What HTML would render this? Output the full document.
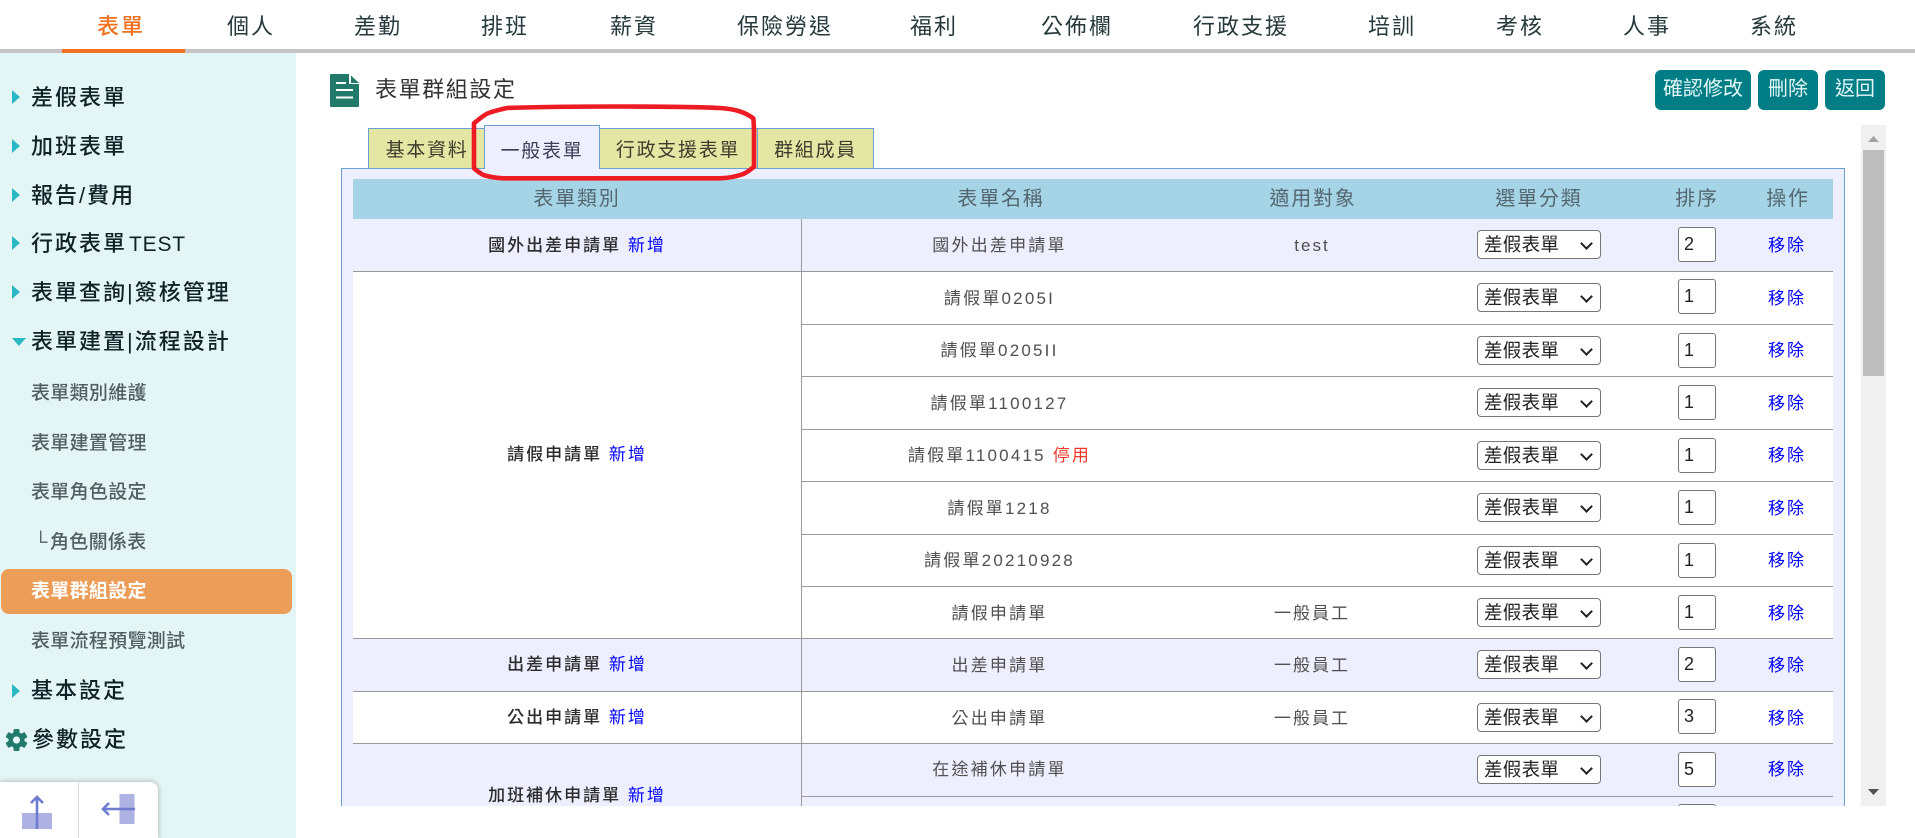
<!DOCTYPE html>
<html lang="zh-Hant">
<head>
<meta charset="utf-8">
<title>表單群組設定</title>
<style>
html,body{margin:0;padding:0;width:1915px;height:838px;overflow:hidden;background:#fff}
body{position:relative;font-family:"Liberation Sans","Noto Sans CJK TC",sans-serif;color:#333}
*{box-sizing:content-box}
.abs{position:absolute}
.nav{position:absolute;top:7px;margin-left:-1px;width:200px;height:40px;line-height:40px;text-align:center;font-size:22px;letter-spacing:2px;color:#25393c;white-space:nowrap}
#line{position:absolute;left:0;top:49px;width:1915px;height:4px;background:#c4c4c4}
#under{position:absolute;left:62px;top:49px;width:123px;height:4px;background:#f0711f}
#side{position:absolute;left:0;top:53px;width:296px;height:785px;background:#e4f5f6}
.m{position:absolute;left:31px;height:40px;line-height:40px;font-size:22px;letter-spacing:2px;color:#0f2226;font-weight:500;white-space:nowrap}
.m span{font-size:21px;letter-spacing:.8px;margin-left:2px}
.s{position:absolute;left:31px;height:40px;line-height:40px;font-size:19px;letter-spacing:.3px;color:#525f62;font-weight:500;white-space:nowrap}
.tri{position:absolute;left:12px;width:0;height:0;border-left:8px solid #2ab9c4;border-top:7px solid transparent;border-bottom:7px solid transparent}
#pill{position:absolute;left:1px;top:569px;width:291px;height:45px;background:#ec9d58;border-radius:8px}
#dock{position:absolute;left:0;top:782px;width:158px;height:56px;background:#fff;border-radius:0 8px 0 0;box-shadow:0 0 6px rgba(0,0,0,.3)}
#title{position:absolute;left:375px;top:70px;height:40px;line-height:40px;font-size:22px;letter-spacing:1.6px;color:#333;white-space:nowrap}
.btn{position:absolute;top:70px;height:40px;line-height:39px;text-align:center;background:#007d85;border-radius:6px;color:#e4f7f7;font-size:20px;letter-spacing:0}
#layer{position:absolute;left:0;top:0;width:1915px;height:838px;clip-path:inset(0 0 32px 0)}
.tab{position:absolute;top:128px;height:40px;box-sizing:border-box;background:#e4e7a4;border:1px solid #6a9fd2;border-bottom:none;line-height:44px;text-align:center;font-size:19px;letter-spacing:1.7px;color:#3c3c2c;white-space:nowrap}
#panel{position:absolute;left:341px;top:168px;width:1502px;height:660px;background:#edefff;border:1px solid #6a9fd2}
#atab{position:absolute;left:484px;top:125px;width:116px;height:44px;box-sizing:border-box;background:#edefff;border:1px solid #6a9fd2;border-bottom:none;line-height:52px;text-align:center;font-size:19px;letter-spacing:1.7px;color:#3d3d55;white-space:nowrap}
#thead{position:absolute;left:353px;top:179px;width:1480px;height:40px;background:#a5d4e6}
.th{position:absolute;top:180px;width:200px;height:40px;line-height:39px;text-align:center;font-size:20px;letter-spacing:1.8px;color:#54666e;white-space:nowrap}
.c1{position:absolute;left:353px;width:448px;text-align:center;font-size:17px;letter-spacing:2px;color:#2b2b2b;font-weight:500;border-bottom:1px solid #999;white-space:nowrap}
.c1 a,.x{color:#00f;font-weight:400;text-decoration:none}
#vline{position:absolute;left:801px;top:219px;width:1px;height:620px;background:#999}
.r{position:absolute;left:802px;width:1031px;border-bottom:1px solid #999}
.bg{background:#edefff}.wh{background:#fff}
.n{position:absolute;left:-1px;top:2px;width:397px;height:100%;text-align:center;font-size:17px;letter-spacing:2.2px;color:#505050;white-space:nowrap}
.t{position:absolute;left:410px;top:2px;width:200px;height:100%;text-align:center;font-size:17px;letter-spacing:2px;color:#505050;white-space:nowrap}
.x{position:absolute;left:885px;top:2px;width:200px;height:100%;text-align:center;font-size:17px;letter-spacing:2px;white-space:nowrap}
select{position:absolute;left:675px;width:124px;height:29px;box-sizing:border-box;padding:0 0 0 6px;margin:0;background:#fff;border:1px solid #767676;border-radius:4px;color:#222;font-family:"Liberation Sans","Noto Sans CJK TC",sans-serif;font-size:18.5px;letter-spacing:.3px;appearance:none;-webkit-appearance:none}
.ch{position:absolute;left:780px;width:9px;height:9px;margin-top:-1px;box-sizing:border-box;border-right:2px solid #222;border-bottom:2px solid #222;transform:rotate(45deg)}
input{position:absolute;left:876px;width:38px;height:35px;box-sizing:border-box;padding:0 0 0 5px;margin:0;background:#fff;border:1px solid #767676;border-radius:3px;color:#222;font-family:"Liberation Sans","Noto Sans CJK TC",sans-serif;font-size:18px}
#bar{position:absolute;left:1861px;top:125px;width:25px;height:681px;background:#f0f0f0}
#thumb{position:absolute;left:2px;top:25px;width:21px;height:226px;background:#bdbdbd}
.red{color:#f0392b}
</style>
</head>
<body>
<div class="nav" style="left:22px;color:#f0711f;font-weight:500">表單</div>
<div class="nav" style="left:152px">個人</div>
<div class="nav" style="left:279px">差勤</div>
<div class="nav" style="left:406px">排班</div>
<div class="nav" style="left:535px">薪資</div>
<div class="nav" style="left:686px">保險勞退</div>
<div class="nav" style="left:835px">福利</div>
<div class="nav" style="left:978px">公佈欄</div>
<div class="nav" style="left:1142px">行政支援</div>
<div class="nav" style="left:1293px">培訓</div>
<div class="nav" style="left:1421px">考核</div>
<div class="nav" style="left:1548px">人事</div>
<div class="nav" style="left:1675px">系統</div>
<div id="line"></div><div id="under"></div>

<div id="side"></div>
<div class="tri" style="top:90px"></div><div class="m" style="top:78px">差假表單</div>
<div class="tri" style="top:139px"></div><div class="m" style="top:127px">加班表單</div>
<div class="tri" style="top:188px"></div><div class="m" style="top:176px">報告/費用</div>
<div class="tri" style="top:236px"></div><div class="m" style="top:224px">行政表單<span>TEST</span></div>
<div class="tri" style="top:285px"></div><div class="m" style="top:273px">表單查詢|簽核管理</div>
<div class="abs" style="left:12px;top:338px;width:0;height:0;border-top:8px solid #2ab9c4;border-left:7px solid transparent;border-right:7px solid transparent"></div>
<div class="m" style="top:322px">表單建置|流程設計</div>
<div class="s" style="top:374px">表單類別維護</div>
<div class="s" style="top:424px">表單建置管理</div>
<div class="s" style="top:473px">表單角色設定</div>
<div class="s" style="top:523px;left:34px;font-weight:400">└</div>
<div class="s" style="top:523px;left:50px">角色關係表</div>
<div id="pill"></div>
<div class="s" style="top:572px;color:#fff;font-weight:700">表單群組設定</div>
<div class="s" style="top:622px">表單流程預覽測試</div>
<div class="tri" style="top:684px"></div><div class="m" style="top:671px">基本設定</div>
<svg class="abs" style="left:5px;top:728px" width="23" height="24" viewBox="0 0 23 24"><g fill="#217a69"><g id="tt"><rect x="8.5" y="1" width="6" height="22" rx="1.2"/><rect x="8.5" y="1" width="6" height="22" rx="1.2" transform="rotate(60 11.5 12)"/><rect x="8.5" y="1" width="6" height="22" rx="1.2" transform="rotate(120 11.5 12)"/></g></g><circle cx="11.500" cy="12" r="6.2" fill="none" stroke="#217a69" stroke-width="3.6"/><circle cx="11.500" cy="12" r="3.6" fill="#e4f5f6"/></svg>
<div class="m" style="top:720px;left:32px">參數設定</div>
<div id="dock"></div>
<div class="abs" style="left:78px;top:782px;width:1px;height:56px;background:#d9d9d9"></div>
<svg class="abs" style="left:0;top:782px" width="158" height="56" viewBox="0 0 158 56">
<rect x="22" y="31" width="30" height="16" fill="#aeb2e2"/>
<path d="M37 47V15M31 21l6-6 6 6" fill="none" stroke="#6f7bd0" stroke-width="2.6"/>
<rect x="119.500" y="12" width="15" height="30" fill="#aeb2e2"/>
<path d="M135 27H103M109 21l-6 6 6 6" fill="none" stroke="#6f7bd0" stroke-width="2.6"/>
</svg>

<svg class="abs" style="left:330px;top:74px" width="30" height="33" viewBox="0 0 30 33">
<path d="M0 1a1 1 0 0 1 1-1h18v10h10v22a1 1 0 0 1-1 1H1a1 1 0 0 1-1-1z" fill="#217a69"/>
<path d="M21 1.500l8 7.500h-8z" fill="#217a69"/>
<path d="M6 9h10M6 16h17M6 23.500h17" stroke="#fff" stroke-width="2"/>
</svg>
<div id="title">表單群組設定</div>
<div class="btn" style="left:1655px;width:96px">確認修改</div>
<div class="btn" style="left:1758px;width:60px">刪除</div>
<div class="btn" style="left:1825px;width:60px">返回</div>

<div id="layer">
<div class="tab" style="left:368px;width:118px">基本資料</div>
<div class="tab" style="left:598px;width:160px">行政支援表單</div>
<div class="tab" style="left:757px;width:117px">群組成員</div>
<div id="panel"></div>
<div id="atab">一般表單</div>
<div id="thead"></div>
<div class="th" style="left:477px">表單類別</div>
<div class="th" style="left:901px">表單名稱</div>
<div class="th" style="left:1213px">適用對象</div>
<div class="th" style="left:1439px">選單分類</div>
<div class="th" style="left:1597px">排序</div>
<div class="th" style="left:1688px">操作</div>

<div class="c1 bg" style="top:219px;height:52px;line-height:53px">國外出差申請單 <a>新增</a></div>
<div class="c1 wh" style="top:272px;height:366px;line-height:366px">請假申請單 <a>新增</a></div>
<div class="c1 bg" style="top:639px;height:52px;line-height:52px">出差申請單 <a>新增</a></div>
<div class="c1 wh" style="top:692px;height:51px;line-height:52px">公出申請單 <a>新增</a></div>
<div class="c1 bg" style="top:744px;height:104px;line-height:104px">加班補休申請單 <a>新增</a></div>
<div id="vline"></div>

<div class="r bg" style="top:219px;height:52px;line-height:49px"><div class="n">國外出差申請單</div><div class="t">test</div><select style="top:11px"><option>差假表單</option></select><i class="ch" style="top:21px"></i><input style="top:8px" value="2"><a class="x">移除</a></div>
<div class="r wh" style="top:272px;height:52px;line-height:50px"><div class="n">請假單0205I</div><select style="top:11px"><option>差假表單</option></select><i class="ch" style="top:21px"></i><input style="top:7px" value="1"><a class="x">移除</a></div>
<div class="r wh" style="top:325px;height:51px;line-height:47px"><div class="n">請假單0205II</div><select style="top:11px"><option>差假表單</option></select><i class="ch" style="top:21px"></i><input style="top:8px" value="1"><a class="x">移除</a></div>
<div class="r wh" style="top:377px;height:52px;line-height:50px"><div class="n">請假單1100127</div><select style="top:11px"><option>差假表單</option></select><i class="ch" style="top:21px"></i><input style="top:8px" value="1"><a class="x">移除</a></div>
<div class="r wh" style="top:430px;height:51px;line-height:47px"><div class="n">請假單1100415 <span class="red">停用</span></div><select style="top:11px"><option>差假表單</option></select><i class="ch" style="top:21px"></i><input style="top:8px" value="1"><a class="x">移除</a></div>
<div class="r wh" style="top:482px;height:52px;line-height:50px"><div class="n">請假單1218</div><select style="top:11px"><option>差假表單</option></select><i class="ch" style="top:21px"></i><input style="top:8px" value="1"><a class="x">移除</a></div>
<div class="r wh" style="top:535px;height:51px;line-height:47px"><div class="n">請假單20210928</div><select style="top:11px"><option>差假表單</option></select><i class="ch" style="top:21px"></i><input style="top:8px" value="1"><a class="x">移除</a></div>
<div class="r wh" style="top:587px;height:51px;line-height:50px"><div class="n">請假申請單</div><div class="t">一般員工</div><select style="top:11px"><option>差假表單</option></select><i class="ch" style="top:21px"></i><input style="top:8px" value="1"><a class="x">移除</a></div>
<div class="r bg" style="top:639px;height:52px;line-height:49px"><div class="n">出差申請單</div><div class="t">一般員工</div><select style="top:11px"><option>差假表單</option></select><i class="ch" style="top:21px"></i><input style="top:8px" value="2"><a class="x">移除</a></div>
<div class="r wh" style="top:692px;height:51px;line-height:50px"><div class="n">公出申請單</div><div class="t">一般員工</div><select style="top:11px"><option>差假表單</option></select><i class="ch" style="top:21px"></i><input style="top:7px" value="3"><a class="x">移除</a></div>
<div class="r bg" style="top:744px;height:52px;line-height:48px"><div class="n">在途補休申請單</div><select style="top:11px"><option>差假表單</option></select><i class="ch" style="top:21px"></i><input style="top:8px" value="5"><a class="x">移除</a></div>
<div class="r bg" style="top:797px;height:52px;line-height:50px"><input style="top:7px" value=""></div>

<svg class="abs" style="left:0;top:0;pointer-events:none" width="1915" height="838"><path d="M474 123.300C486.700 112.700 486.700 112.700 506.700 108C560 106 680 106 720 108C735 109 745 112 753.300 118.300C754 125 754 128 754 133V166.700C750 170 748 172 743.300 174C735 177 728 178 720 178.300H503.300C495 178 490 177 483.300 175C478 172 476 170 474 168.300Z" fill="none" stroke="#ed1c24" stroke-width="4.6" stroke-linejoin="round"/></svg>

<div id="bar"><div id="thumb"></div>
<svg class="abs" style="left:0;top:0" width="25" height="681"><path d="M7 17l5.500-6 5.500 6z" fill="#a3a3a3"/><path d="M7 664h11l-5.500 6z" fill="#505050"/></svg>
</div>
</div>
</body>
</html>
